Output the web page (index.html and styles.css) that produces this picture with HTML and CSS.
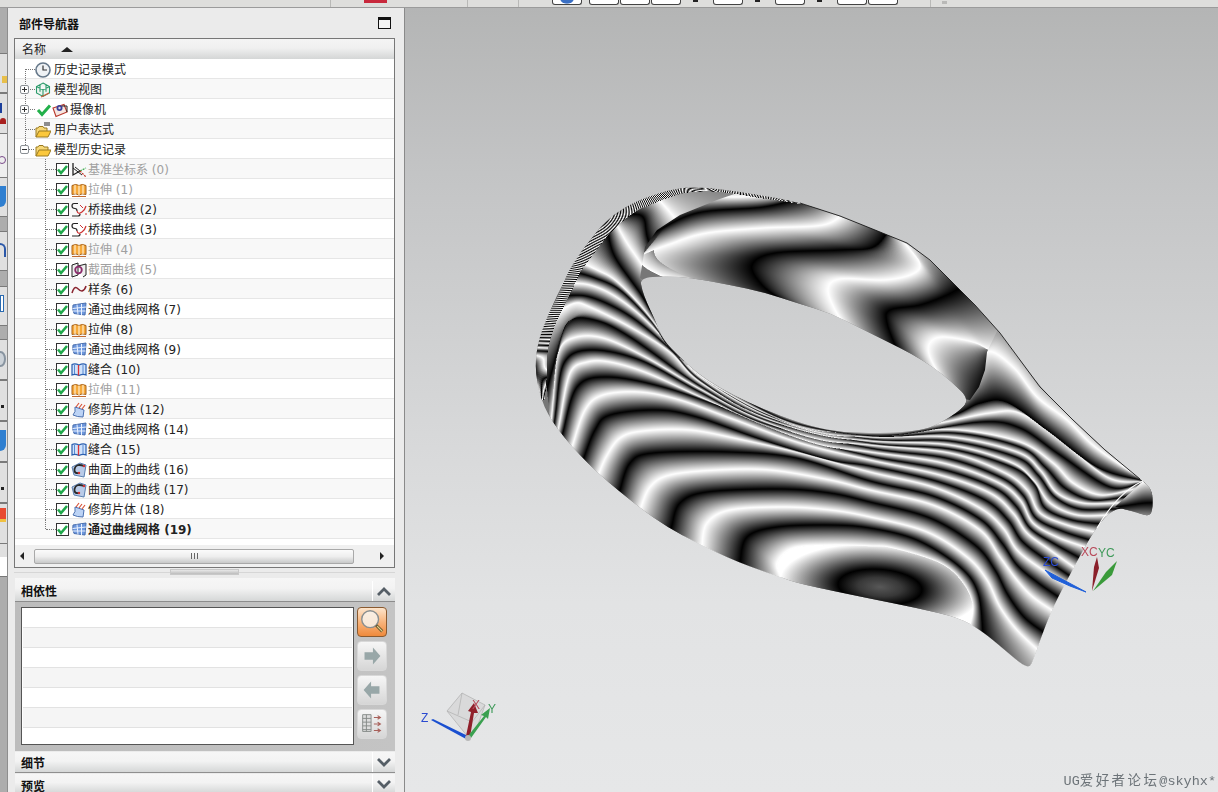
FILE: index.html
```html
<!DOCTYPE html>
<html lang="zh">
<head>
<meta charset="utf-8">
<title>部件导航器</title>
<link rel="stylesheet" href="styles.css">
</head>
<body>
<svg class="defs" width="0" height="0">
  <defs>
    <symbol id="i-clock" viewBox="0 0 16 16"><circle cx="8" cy="8" r="7" fill="#eef1f4" stroke="#66788a" stroke-width="1.6"/><path d="M8 3.500V8H12" fill="none" stroke="#333" stroke-width="1.2"/></symbol>
    <symbol id="i-cube" viewBox="0 0 16 16"><path d="M8 1L14.500 4.500V11L8 14.500L1.500 11V4.500Z M1.500 4.500L8 8L14.500 4.500 M8 8V14.500 M5 2.800V9.700 M11 2.800V9.700" fill="#dcefe6" fill-opacity=".5" stroke="#2a9a6a" stroke-width="1.100"/><path d="M6 15L14 11" stroke="#d05a3a" stroke-width="1.200"/></symbol>
    <symbol id="i-tick" viewBox="0 0 16 16"><path d="M2 8L6 12.500L14 3.500" fill="none" stroke="#22b04a" stroke-width="3"/></symbol>
    <symbol id="i-cam" viewBox="0 0 16 16"><path d="M1 6L12 2.500L15 10L4 14.500Z" fill="#f6e6e0" stroke="#b8382c" stroke-width="1.100"/><circle cx="7.500" cy="6" r="3" fill="#3a3f9a"/><circle cx="7.500" cy="6" r="1.200" fill="#ddd"/><path d="M10 4H15V10" fill="none" stroke="#222"/></symbol>
    <symbol id="i-folder" viewBox="0 0 16 16"><path d="M1 14V5H3L4 3.500H8L9 5H13V8" fill="#f6d878" stroke="#9a7a20"/><path d="M1 14L4 8H16L13 14Z" fill="#fbc83c" stroke="#9a7a20"/></symbol>
    <symbol id="i-exprf" viewBox="0 0 16 16"><path d="M1 15V6H3L4 4.500H8L9 6H12V9" fill="#f6d878" stroke="#9a7a20"/><path d="M1 15L4 9H16L13 15Z" fill="#fbc83c" stroke="#9a7a20"/><path d="M9 1H15M9 3H15" stroke="#222"/></symbol>
    <symbol id="i-datum" viewBox="0 0 16 16"><path d="M2 1V13L9 9" fill="none" stroke="#222" stroke-width="1.300"/><path d="M2 6L11 13M4 5L9 9" fill="none" stroke="#222"/><path d="M9 9L15 6" stroke="#3aa84a" stroke-dasharray="2 1" stroke-width="1.200"/><path d="M9 9L15 15" stroke="#c0392b" stroke-dasharray="2 1" stroke-width="1.200"/></symbol>
    <symbol id="i-ext" viewBox="0 0 16 16"><path d="M1 3.500Q5 1.500 8 3.500Q11 1.500 15 3.500V12.500Q11 11 8 13Q5 11 1 12.500Z" fill="#f6a93a" stroke="#a9631a"/><path d="M4 3V12M8 3.500V13M12 3V12" stroke="#fff3d8" stroke-width="1.100"/><path d="M1 14.500H15" stroke="#c06a30"/></symbol>
    <symbol id="i-bridge" viewBox="0 0 16 16"><path d="M7 1.500H3Q1 1.500 1 4Q1 6.500 4 6.500Q6 6.500 6 9" fill="none" stroke="#222" stroke-width="1.200"/><path d="M1 14H7Q9 14 9 12" fill="none" stroke="#222" stroke-width="1.200"/><path d="M6 9Q7 13 11 10Q14 8 15 4" fill="none" stroke="#c33" stroke-width="1.200"/><path d="M9 3L12 6M14 12H16" stroke="#c33"/></symbol>
    <symbol id="i-sect" viewBox="0 0 16 16"><path d="M1 3L7 1V13L1 15Z M7 4L15 2V13L12 15" fill="#eee" stroke="#222"/><circle cx="7.500" cy="8" r="3.300" fill="none" stroke="#8a2a6a" stroke-width="1.800"/></symbol>
    <symbol id="i-spline" viewBox="0 0 16 16"><path d="M1 11Q3 4 6 6Q9 9 11 9Q14 8 15 4" fill="none" stroke="#8a2530" stroke-width="1.500"/></symbol>
    <symbol id="i-mesh" viewBox="0 0 16 16"><path d="M2 3L15 1L14 13L3 11.500Q1 7 2 3Z" fill="#6d97dd" stroke="#4a6fae"/><path d="M6 2.500L7 12.500M10.500 2L10.500 13M1.500 6.500L15 5M2 9L14.500 9" stroke="#eaf2ff"/></symbol>
    <symbol id="i-sew" viewBox="0 0 16 16"><path d="M1 2.500Q4 1 8 3Q12 1 15 2.500V13Q12 11.500 8 13.500Q4 11.500 1 13Z" fill="#cfe2fb" stroke="#2a5fb0" stroke-width="1.200"/><path d="M7.500 3V13.500" stroke="#d33" stroke-width="1.300"/><path d="M3.500 3V12M12 3V12" stroke="#5a8ad0"/></symbol>
    <symbol id="i-trim" viewBox="0 0 16 16"><path d="M4 5L13 8L12 15Q6 15 2 13Q5 10 4 5Z" fill="#bcd3f5" stroke="#4a70b0"/><path d="M5 5L8 1M8 6L11 2M11 7L14 3" stroke="#d8553a" stroke-width="1.200"/></symbol>
    <symbol id="i-cos" viewBox="0 0 16 16"><path d="M1 5L9 1L15 3L13 15L3 13Z" fill="#b9cbe8" stroke="#5a7fb0"/><path d="M13 4Q5 1 3.500 7Q3 12 8 11" fill="none" stroke="#2a2a2a" stroke-width="1.800"/><circle cx="13" cy="4" r="1.200" fill="#c33"/><circle cx="8" cy="11" r="1.200" fill="#c33"/></symbol>
    <symbol id="i-cb" viewBox="0 0 13 13"><rect x=".5" y=".5" width="12" height="12" fill="#fff" stroke="#333"/><path d="M2 6.500L5 10L11 3" fill="none" stroke="#1fa84a" stroke-width="2.600"/></symbol>
    <symbol id="i-up" viewBox="0 0 20 12"><path d="M4 10L10 4L16 10" fill="none" stroke="#555e66" stroke-width="2.800"/></symbol>
    <symbol id="i-down" viewBox="0 0 20 12"><path d="M4 3L10 9L16 3" fill="none" stroke="#555e66" stroke-width="2.800"/></symbol>
  </defs>
</svg>

<div class="app">
  <div class="topbar">
    <span class="tb-red"></span>
    <span class="tb-btn tb-blue"></span>
    <span class="tb-btn tb-after"></span>
    <span class="tb-btn"></span>
    <span class="tb-btn"></span>
    <span class="tb-btn tb-far"></span>
    <span class="tb-btn tb-far"></span>
    <span class="tb-btn tb-far"></span>
    <span class="tb-btn"></span>
  </div>
  <div class="main">
    <div class="strip">
      <div class="s-dark s53"></div>
      <div class="s-cell s40"><i class="dot dot-yellow"></i></div>
      <div class="s-cell s41"><i class="bar bar-blue"></i><i class="dot dot-red"></i></div>
      <div class="s-plain s43"><i class="ring"></i></div>
      <div class="s-cell s40"><i class="bar bar-sky"></i></div>
      <div class="s-dark s14"></div>
      <div class="s-cell s40"><i class="bar bar-navy"></i></div>
      <div class="s-dark s15"></div>
      <div class="s-cell s40"><i class="bar bar-page"></i></div>
      <div class="s-dark s13"></div>
      <div class="s-cell s41"><i class="ring ring-grey"></i></div>
      <div class="s-cell s41"><i class="dot dot-black"></i></div>
      <div class="s-cell s41"><i class="bar bar-sky"></i></div>
      <div class="s-cell s41"><i class="dot dot-black"></i></div>
      <div class="s-cell s41"><i class="bar bar-hot"></i></div>
      <div class="s-white"></div>
      <div class="s-dark s-rest"></div>
    </div>

    <section class="panel">
      <header class="panel-head">
        <h1>部件导航器</h1>
        <span class="maxbox"></span>
      </header>

      <div class="tree">
        <div class="tree-head"><span>名称</span><i class="sort"></i></div>
        <div class="rows">
          <div class="row root vfirst"><span class="slot"></span><svg class="ic"><use href="#i-clock"/></svg><span class="tx">历史记录模式</span></div>
          <div class="row root vmid"><span class="slot"><b class="exp plus"></b></span><svg class="ic"><use href="#i-cube"/></svg><span class="tx">模型视图</span></div>
          <div class="row root vmid"><span class="slot"><b class="exp plus"></b></span><svg class="ic ic-tick"><use href="#i-tick"/></svg><svg class="ic"><use href="#i-cam"/></svg><span class="tx tx-cam">摄像机</span></div>
          <div class="row root vmid"><span class="slot"></span><svg class="ic"><use href="#i-exprf"/></svg><span class="tx">用户表达式</span></div>
          <div class="row root vlast nodash"><span class="slot"><b class="exp minus"></b></span><svg class="ic"><use href="#i-folder"/></svg><span class="tx">模型历史记录</span></div>

          <div class="row kid"><svg class="cb"><use href="#i-cb"/></svg><svg class="ic"><use href="#i-datum"/></svg><span class="tx off">基准坐标系 (0)</span></div>
          <div class="row kid"><svg class="cb"><use href="#i-cb"/></svg><svg class="ic"><use href="#i-ext"/></svg><span class="tx off">拉伸 (1)</span></div>
          <div class="row kid"><svg class="cb"><use href="#i-cb"/></svg><svg class="ic"><use href="#i-bridge"/></svg><span class="tx">桥接曲线 (2)</span></div>
          <div class="row kid"><svg class="cb"><use href="#i-cb"/></svg><svg class="ic"><use href="#i-bridge"/></svg><span class="tx">桥接曲线 (3)</span></div>
          <div class="row kid"><svg class="cb"><use href="#i-cb"/></svg><svg class="ic"><use href="#i-ext"/></svg><span class="tx off">拉伸 (4)</span></div>
          <div class="row kid"><svg class="cb"><use href="#i-cb"/></svg><svg class="ic"><use href="#i-sect"/></svg><span class="tx off">截面曲线 (5)</span></div>
          <div class="row kid"><svg class="cb"><use href="#i-cb"/></svg><svg class="ic"><use href="#i-spline"/></svg><span class="tx">样条 (6)</span></div>
          <div class="row kid"><svg class="cb"><use href="#i-cb"/></svg><svg class="ic"><use href="#i-mesh"/></svg><span class="tx">通过曲线网格 (7)</span></div>
          <div class="row kid"><svg class="cb"><use href="#i-cb"/></svg><svg class="ic"><use href="#i-ext"/></svg><span class="tx">拉伸 (8)</span></div>
          <div class="row kid"><svg class="cb"><use href="#i-cb"/></svg><svg class="ic"><use href="#i-mesh"/></svg><span class="tx">通过曲线网格 (9)</span></div>
          <div class="row kid"><svg class="cb"><use href="#i-cb"/></svg><svg class="ic"><use href="#i-sew"/></svg><span class="tx">缝合 (10)</span></div>
          <div class="row kid"><svg class="cb"><use href="#i-cb"/></svg><svg class="ic"><use href="#i-ext"/></svg><span class="tx off">拉伸 (11)</span></div>
          <div class="row kid"><svg class="cb"><use href="#i-cb"/></svg><svg class="ic"><use href="#i-trim"/></svg><span class="tx">修剪片体 (12)</span></div>
          <div class="row kid"><svg class="cb"><use href="#i-cb"/></svg><svg class="ic"><use href="#i-mesh"/></svg><span class="tx">通过曲线网格 (14)</span></div>
          <div class="row kid"><svg class="cb"><use href="#i-cb"/></svg><svg class="ic"><use href="#i-sew"/></svg><span class="tx">缝合 (15)</span></div>
          <div class="row kid"><svg class="cb"><use href="#i-cb"/></svg><svg class="ic"><use href="#i-cos"/></svg><span class="tx">曲面上的曲线 (16)</span></div>
          <div class="row kid"><svg class="cb"><use href="#i-cb"/></svg><svg class="ic"><use href="#i-cos"/></svg><span class="tx">曲面上的曲线 (17)</span></div>
          <div class="row kid"><svg class="cb"><use href="#i-cb"/></svg><svg class="ic"><use href="#i-trim"/></svg><span class="tx">修剪片体 (18)</span></div>
          <div class="row kid kid-last"><svg class="cb"><use href="#i-cb"/></svg><svg class="ic"><use href="#i-mesh"/></svg><span class="tx cur">通过曲线网格 (19)</span></div>
        </div>
        <div class="hscroll">
          <i class="arr arr-l"></i>
          <div class="thumb"><span class="grip"></span></div>
          <i class="arr arr-r"></i>
        </div>
      </div>

      <div class="sash"><span class="sash-handle"></span></div>

      <div class="acc-head acc-first"><span>相依性</span><button class="chev"><svg class="chev-ic"><use href="#i-up"/></svg></button></div>
      <div class="acc-body">
        <div class="dep-list">
          <div class="dep-row"></div><div class="dep-row"></div><div class="dep-row"></div><div class="dep-row"></div><div class="dep-row"></div><div class="dep-row"></div><div class="dep-row"></div>
        </div>
        <div class="dep-btns">
          <button class="dep-btn hot">
            <svg viewBox="0 0 30 30" class="dep-ic"><circle cx="13" cy="12" r="9" fill="#f8f2ea" fill-opacity=".85" stroke="#8a8f90" stroke-width="1.500"/><path d="M19.500 18.500L26 25" stroke="#6a5a30" stroke-width="3.200"/><path d="M20.500 19.500L26 25" stroke="#e8d690" stroke-width="1.200"/></svg>
          </button>
          <button class="dep-btn">
            <svg viewBox="0 0 30 30" class="dep-ic"><path d="M7 11H16V6L24 15L16 24V19H7Z" fill="#98a7a8"/></svg>
          </button>
          <button class="dep-btn">
            <svg viewBox="0 0 30 30" class="dep-ic"><path d="M23 11H14V6L6 15L14 24V19H23Z" fill="#98a7a8"/></svg>
          </button>
          <button class="dep-btn">
            <svg viewBox="0 0 30 30" class="dep-ic"><path d="M5 5H14V23H5Z M5 9H14M5 13H14M5 17H14M5 21H14M9 5V23" fill="#ddd" stroke="#858a88"/><path d="M17 8H23M21 6L24 8L21 10M17 15H23M21 13L24 15L21 17M17 22H23M21 20L24 22L21 24" fill="none" stroke="#a8605a" stroke-width="1.200"/></svg>
          </button>
        </div>
      </div>
      <div class="acc-head acc-second"><span>细节</span><button class="chev"><svg class="chev-ic"><use href="#i-down"/></svg></button></div>
      <div class="acc-head acc-third"><span>预览</span><button class="chev"><svg class="chev-ic"><use href="#i-down"/></svg></button></div>
    </section>

    <div class="view">
      <canvas id="zebra" class="zebra" width="813" height="784"></canvas>
      <svg class="scene" viewBox="405 8 813 784" width="813" height="784">
        <g class="wcs">
          <path class="ax-blue" d="M1086 592L1045 570L1052 578L1070 586Z"/>
          <path class="ax-red" d="M1092 591L1094 567L1097 557L1099 568Z"/>
          <path class="ax-green" d="M1093 591L1106 572L1117 561L1112 575Z"/>
          <text class="lbl lbl-blue" x="1043" y="566">ZC</text>
          <text class="lbl lbl-red" x="1081" y="556">XC</text>
          <text class="lbl lbl-green" x="1098" y="557">YC</text>
        </g>
        <g class="triad">
          <path class="cube-face" d="M447 711L462 693L485 705L476 730L468 737Z"/>
          <path class="cube-line" d="M447 711L462 693L485 705L476 730L468 737L447 711M447 711L472 722L485 705M472 722L468 737M462 693L458 715"/>
          <path class="tr-blue" d="M468 736L433 719L431 720L466 739Z"/>
          <path class="tr-red" d="M466 736L471 712L468 711L474 703L478 713L474 713L470 737Z"/>
          <path class="tr-green" d="M468 736L484 716L481 715L490 708L488 719L486 717L471 738Z"/>
          <circle class="tr-ball" cx="468" cy="738" r="3"/>
          <text class="lbl lbl-blue" x="421" y="722">Z</text>
          <text class="lbl lbl-red" x="472" y="709">X</text>
          <text class="lbl lbl-green" x="488" y="713">Y</text>
        </g>
      </svg>
      <div class="mark">UG<span class="mark-cjk">爱好者论坛</span>@skyhx*</div>
    </div>
  </div>
</div>
<script src="script.js"></script>
</body>
</html>
```

FILE: styles.css
```css
* { box-sizing: border-box; }
html, body { margin: 0; padding: 0; }
body { width: 1218px; height: 792px; overflow: hidden; background: #e6e7e8; font-family: "DejaVu Sans", "Noto Sans CJK SC", sans-serif; font-size: 12px; color: #222; }
.defs { position: absolute; }
.app { display: flex; flex-direction: column; width: 1218px; height: 792px; overflow: hidden; }

/* top toolbar, cut off by the screenshot */
.topbar { flex: 0 0 8px; display: flex; align-items: flex-start; gap: 1px; padding-left: 552px; border-bottom: 1px solid #9b9b9b; position: relative;
  background:
    linear-gradient(#b9b9b7, #b9b9b7) no-repeat 330px 0 / 1px 7px,
    linear-gradient(#b9b9b7, #b9b9b7) no-repeat 467px 0 / 1px 7px,
    linear-gradient(#b9b9b7, #b9b9b7) no-repeat 518px 0 / 1px 7px,
    linear-gradient(#b9b9b7, #b9b9b7) no-repeat 930px 0 / 1px 7px,
    linear-gradient(#b9b9b7, #b9b9b7) no-repeat 942px 1px / 5px 3px,
    #dededc; }
.tb-btn { width: 30px; height: 5px; background: #fff; border: 1px solid #444; border-top: 0; border-radius: 0 0 3px 3px; position: relative; }
.tb-blue { background: radial-gradient(ellipse 7px 4px at 50% 0, #3a6fc4 80%, #fff 100%); }
.tb-after { margin-left: 6px; }
.tb-far { margin-left: 31px; }
.tb-far::before { content: ""; position: absolute; left: -21px; top: 0; width: 5px; height: 2px; background: #222; }
.tb-red { position: absolute; left: 364px; top: 0; width: 23px; height: 3px; background: #c8283c; }

.main { flex: 1; display: flex; min-height: 0; }

/* left toolbar column, mostly out of frame */
.strip { flex: 0 0 8px; display: flex; flex-direction: column; overflow: hidden; border-right: 1px solid #8e8e8e; background: #ebebeb; }
.strip > div { flex: none; position: relative; overflow: hidden; }
.s-dark { background: #adadad; }
.s-cell { background: #e0e0e0; border-top: 1px solid #7a7a7a; border-bottom: 1px solid #7a7a7a; }
.s-plain { background: #eeeeee; }
.s-white { height: 33px; background: linear-gradient(#e0e0e0 40%, #fff 40%); border-bottom: 1px solid #777; }
.s53 { height: 45px; } .s40 { height: 40px; } .s41 { height: 41px; } .s43 { height: 43px; }
.s14 { height: 14px; } .s15 { height: 15px; } .s13 { height: 13px; }
.s-rest { height: 240px; }
.dot, .bar, .ring { position: absolute; display: block; }
.dot-yellow { left: 2px; top: 22px; width: 5px; height: 7px; background: #e8bf4a; }
.dot-red { left: 0; top: 24px; width: 6px; height: 6px; background: #a8201e; border-radius: 6px 6px 0 0; }
.dot-black { left: 1px; top: 24px; width: 3px; height: 3px; background: #222; }
.bar-blue { left: 0; top: 9px; width: 2px; height: 10px; background: #1c3f9c; }
.bar-sky { left: 0; top: 8px; width: 6px; height: 21px; background: #2f7fd0; border-radius: 0 0 6px 0; }
.bar-navy { left: 0; top: 11px; width: 6px; height: 14px; border: 2px solid #2a57a8; border-left: 0; border-bottom: 0; border-radius: 0 8px 0 0; }
.bar-page { left: 0; top: 8px; width: 4px; height: 17px; background: #fff; border: 1px solid #2a6ab0; }
.bar-hot { left: 0; top: 4px; width: 6px; height: 14px; background: #e84a30; border-bottom: 3px solid #f0c040; }
.ring { left: -2px; top: 22px; width: 8px; height: 8px; border: 1px solid #7a4a8a; border-radius: 50%; }
.ring-grey { left: -5px; top: 11px; width: 11px; height: 16px; border: 2px solid #8894a0; background: #ccd2d8; }

/* navigator panel */
.panel { flex: 0 0 397px; display: flex; flex-direction: column; background: #ebebeb; border-right: 1px solid #8a8a8a; }
.panel-head { flex: 0 0 30px; display: flex; align-items: center; justify-content: space-between; padding: 0 13px 0 11px; }
.panel-head h1 { margin: 0; font: 700 12px "Noto Sans CJK SC", sans-serif; color: #111; }
.maxbox { width: 13px; height: 12px; border: 1.5px solid #111; border-top-width: 3px; background: #f4f4f4; }

.tree { flex: 0 0 530px; margin: 0 9px 0 6px; display: flex; flex-direction: column; border: 1px solid #777; background: #fff; }
.tree-head { flex: 0 0 20px; display: flex; align-items: center; gap: 14px; padding-left: 7px; background: linear-gradient(#f4f4f4, #f0f0f0 45%, #d4d6d6); font-family: "Noto Sans CJK SC", sans-serif; line-height: 1; }
.sort { width: 0; height: 0; border: 6px solid transparent; border-top: 0; border-bottom: 5px solid #222; margin-left: 1px; }
.rows { flex: 0 0 480px; display: flex; flex-direction: column; }
.row { flex: 0 0 20px; display: flex; align-items: center; position: relative; padding-top: 2px; border-bottom: 1px solid #e6e6e6; background: #fff; line-height: 1; white-space: nowrap; }
.row:nth-child(even) { background: #f8f8f8; }
.row::before, .row::after { content: ""; position: absolute; }
.root { padding-left: 5px; }
.root::before { left: 10px; top: 10px; width: 10px; border-top: 1px dotted #777; }
.root::after { left: 10px; width: 0; border-left: 1px dotted #777; top: 0; height: 21px; }
.vfirst::after { top: 10px; height: 11px; }
.vlast::after { height: 10px; }
.nodash::before { width: 9px; }
.slot { flex: 0 0 15px; height: 9px; position: relative; z-index: 1; }
.exp { position: absolute; left: 0; top: 0; width: 9px; height: 9px; background: #fdfdfd; border: 1px solid #8a8f94; border-radius: 2px; }
.plus::before, .plus::after, .minus::before { content: ""; position: absolute; background: #333; }
.plus::before, .minus::before { left: 1px; top: 3px; width: 5px; height: 1px; }
.plus::after { left: 3px; top: 1px; width: 1px; height: 5px; }
.ic { flex: 0 0 16px; width: 16px; height: 16px; position: relative; z-index: 1; }
.ic-tick { margin-left: 1px; }
.tx { margin-left: 3px; color: #222; }
.tx-cam { margin-left: 2px; }
.kid { padding-left: 41px; }
.kid::before { left: 31px; top: 10px; width: 10px; border-top: 1px dotted #777; }
.kid::after { left: 30px; width: 0; border-left: 1px dotted #777; top: 0; height: 21px; }
.kid-last::after { height: 10px; }
.kid .tx { margin-left: 1px; }
.cb { flex: 0 0 13px; width: 13px; height: 13px; margin-right: 2px; }
.off { color: #a0a0a0; }
.cur { font-weight: 700; }

.hscroll { flex: 1; display: flex; align-items: center; background: #f0f0f0; padding: 0 5px 0 0; margin-top: 6px; }
.arr { flex: none; width: 0; height: 0; border: 4px solid transparent; }
.arr-l { border-right: 4px solid #222; border-left: 0; margin-left: 5px; }
.arr-r { border-left: 4px solid #222; border-right: 0; margin-left: 26px; }
.thumb { flex: 0 0 320px; height: 15px; margin-left: 10px; display: flex; align-items: center; justify-content: center; border: 1px solid #a9a9a9; border-radius: 2px; background: linear-gradient(#fbfbfb, #eeeeee 50%, #c8c9c9); }
.grip { width: 7px; height: 6px; background: repeating-linear-gradient(90deg, #666 0 1px, transparent 1px 3px); }

.sash { flex: 0 0 10px; position: relative; margin: 0 9px 0 6px; }
.sash::before { content: ""; position: absolute; left: 0; right: 0; top: 4px; border-top: 1px solid #d6d6d6; }
.sash-handle { position: absolute; left: 156px; top: 1px; width: 69px; height: 6px; background: linear-gradient(#e8e8e8, #bcbcbc); border: 1px solid #c8c8c8; }

.acc-head { display: flex; align-items: center; justify-content: space-between; margin: 0 9px 0 7px; padding-left: 6px; background: linear-gradient(#f6f6f6, #f3f3f3 45%, #d5d7d7); font: 700 12px "Noto Sans CJK SC", sans-serif; color: #111; line-height: 1; }
.acc-first { flex: 0 0 23px; padding-top: 3px; }
.acc-second { flex: 0 0 21px; margin-top: 1px; border-bottom: 1px solid #8f8f8f; }
.acc-second span { position: relative; top: 1px; }
.acc-third { flex: 0 0 19px; margin-top: 1px; align-items: flex-start; padding-top: 6px; }
.chev { align-self: stretch; width: 23px; margin: 0; padding: 0; border: 0; border-left: 1px solid #fff; background: transparent; display: flex; align-items: center; justify-content: center; }
.acc-third .chev { margin-top: -6px; }
.chev-ic { width: 20px; height: 12px; }

.acc-body { flex: 0 0 150px; margin: 0 9px 0 7px; display: flex; align-items: flex-start; gap: 3px; padding: 5px 0 0 6px; background: linear-gradient(90deg, #bcbcbc, #c4c4c4); border-top: 1px solid #8c8c8c; }
.dep-list { flex: 0 0 333px; height: 138px; display: flex; flex-direction: column; background: #fff; border: 1px solid #555; padding: 0 1px; }
.dep-row { flex: 0 0 20px; border-bottom: 1px solid #e2e2e2; background: #fff; }
.dep-row:nth-child(even) { background: #f5f5f5; }
.dep-row:last-child { flex: 1; border-bottom: 0; }
.dep-btns { display: flex; flex-direction: column; gap: 4px; }
.dep-btn { width: 30px; height: 30px; margin: 0; padding: 0; border: 1px solid #d8d8d8; border-radius: 4px; background: linear-gradient(#f6f6f6, #d6d6d6); }
.dep-btn.hot { border-color: #8a5a30; background: linear-gradient(#fde5cc, #f8b47c 50%, #ef8a3c); }
.dep-ic { display: block; width: 28px; height: 28px; }

/* graphics view */
.view { flex: 1; position: relative; overflow: hidden; background: linear-gradient(#b4b5b5, #c3c4c5 21%, #d8d9da 56%, #e2e3e4 76%, #e6e7e8); }
.zebra { display: block; }
.scene { position: absolute; left: 0; top: 0; display: block; }
.lbl { font: 12px "Liberation Sans", sans-serif; }
.lbl-blue { fill: #2a4ad0; } .lbl-red { fill: #b84a5a; } .lbl-green { fill: #3f9a5a; }
.ax-blue { fill: #1f5fd8; stroke: #1f5fd8; }
.ax-red { fill: #8a1f2a; }
.ax-green { fill: #3a9a3a; }
.cube-face { fill: #cfcfcf; fill-opacity: .55; }
.cube-line { fill: none; stroke: #b4b4b4; stroke-width: .8; }
.tr-blue { fill: #1a4fd0; }
.tr-red { fill: #8f1f2a; }
.tr-green { fill: #3aa050; }
.tr-ball { fill: #b8b8b8; }
.mark { position: absolute; right: 2px; bottom: 2px; font: 13.5px "Liberation Mono", "Noto Sans CJK SC", monospace; color: #6c7378; white-space: nowrap; line-height: 16px; }
.mark-cjk { letter-spacing: 2.4px; font-family: "Noto Sans CJK SC", sans-serif; }
```

FILE: script.js
```js
// Zebra (reflection) shading of the surface: each curve is a level of a phase
// field, and the field is filled between neighbouring curves pixel by pixel.
(function () {
  var OX = 405, OY = 8, W = 813, H = 784;
  var canvas = document.getElementById('zebra');
  var ctx = canvas.getContext('2d');
  ctx.translate(-OX, -OY);

  var OUTER = [690,187,720,189,760,195,797,202,840,216,880,232,907,243,930,260,950,280,975,305,1000,333,1020,360,1040,387,1073,420,1105,450,1140,479,1152,489,1153,507,1150,517,1132,511,1115,507,1095,528,1067,580,1050,613,1033,660,1030,667,1023,665,1013,657,993,640,980,630,960,618,917,608,867,598,800,584,783,578,737,562,697,543,667,527,640,508,597,473,563,437,543,407,535,373,537,345,547,317,560,290,573,263,590,240,607,220,627,206,647,197,670,190];
  var HOLE = [640,278,665,276,693,278,730,285,763,292,800,304,830,313,860,328,890,343,912,354,933,367,952,382,970,400,957,413,933,427,915,431,890,433,870,433,840,432,813,427,780,416,747,402,720,388,697,373,680,357,663,340,655,320,647,303,642,290];
  var FRONT_CLIP = [760,185,717,200,680,215,657,230,645,247,640,278,800,380,970,400,979,387,985,370,987,352,1000,325,1170,470,1170,690,900,690,510,500,510,170];
  var LOBE_CLIP = [1143,481,1153,489,1153,507,1150,517,1132,511,1115,507];

  var FRONT = [
    [0,  [782,580,777,563,793,548,830,545,870,546,893,548,940,563,963,583,973,607,968,632]],
    [1,  [740,563,747,537,777,527,830,525,870,528,917,540,960,567,978,593,983,635]],
    [2,  [702,545,707,523,730,510,783,507,830,510,870,517,927,532,967,557,987,580,1000,607,1017,630,1038,650]],
    [3,  [672,525,680,503,707,492,780,489,830,493,870,502,930,518,975,545,995,570,1008,595,1025,618,1048,635]],
    [4,  [640,510,650,487,670,475,717,470,770,470,830,480,870,490,933,505,980,530,1000,557,1017,580,1033,597,1055,612]],
    [5,  [620,490,630,463,653,453,730,452,797,458,870,481,933,496,980,519,1002,543,1017,565,1037,582,1060,598]],
    [6,  [598,476,606,457,620,438,643,431,690,430,743,440,800,453,870,472,933,487,980,508,1003,528,1017,550,1040,568,1066,584]],
    [7,  [583,460,595,430,610,415,657,410,697,417,763,440,830,460,870,466,936,481,985,500,1008,520,1022,541,1045,559,1070,576]],
    [8,  [572,447,585,410,603,395,640,392,680,400,730,418,800,443,870,460,940,475,990,493,1013,513,1027,533,1050,550,1075,568]],
    [9,  [563,432,577,387,607,377,663,387,730,410,800,437,870,456,941,469,993,487,1016,506,1030,528,1053,543,1080,558]],
    [10, [560,420,570,373,587,362,610,362,647,373,700,397,763,425,820,445,870,452,943,463,997,482,1020,500,1033,523,1057,537,1085,547]],
    [11, [556,410,564,363,590,350,640,360,700,392,763,423,870,448,946,458,1000,477,1023,495,1036,518,1062,531,1090,540]],
    [12, [553,400,558,353,573,338,603,338,647,358,700,389,763,421,820,440,870,445,950,453,1003,472,1027,490,1040,513,1067,525,1095,532]],
    [13, [555,360,568,322,595,320,630,337,700,386,763,419,870,443,950,449,1012,467,1035,485,1045,508,1072,520,1102,524]],
    [14, [558,312,575,303,590,307,630,327,670,352,700,382,763,417,820,435,870,441,950,445,1010,462,1033,480,1050,503,1077,515,1108,515]],
    [15, [560,296,590,297,630,316,670,349,700,380,763,416,870,439,950,441,1016,457,1038,475,1055,497,1080,509,1113,509]],
    [16, [570,283,590,285,613,295,640,315,670,345,700,377,763,414,820,433,870,437,950,437,1017,452,1040,470,1057,493,1083,503,1117,503]],
    [17, [575,272,595,278,620,290,650,320,680,358,763,413,870,436,955,433,1020,447,1045,467,1065,488,1092,500,1125,497]],
    [18, [580,262,597,270,615,280,640,305,670,343,700,376,763,412,820,431,900,431,960,430,1020,442,1053,463,1073,483,1100,495,1130,490]],
    [19, [608,232,615,257,640,293,680,352,763,410,830,431,895,435,980,422,1020,428,1060,455,1110,487,1140,483]],
    [20, [618,227,627,243,640,262,665,300,700,365,763,405,820,427,890,432,940,423,990,413,1020,413,1057,437,1107,477,1140,482]],
    [21, [625,215,643,217,650,245,680,300,763,400,830,420,870,419,945,417,980,403,1007,402,1047,430,1097,467,1140,480]],
    [22, [650,190,690,240,763,370,870,398,950,398,975,385,987,352,1013,367,1037,397,1067,420,1095,447,1140,478]],
    [22.5, [650,180,750,200,870,280,960,300,1000,325,1045,380,1110,445,1150,475]]
  ];

  var UPPER = [
    [1, [975,402,985,380,990,360,995,345]],
    [2, [945,385,930,357,930,343,943,337,973,342,990,350,1010,355]],
    [3, [897,350,887,323,890,310,920,305,947,295,965,285]],
    [4, [852,328,838,315,828,290,840,279,883,280,910,275,920,265,908,247,895,232]],
    [5, [785,302,762,285,752,265,775,253,840,250,873,247,890,228]],
    [6, [700,285,660,275,640,258,673,243,707,233,763,228,823,225,845,212]],
    [7, [630,240,653,233,697,213,763,207,800,198]],
    [8, [640,205,663,198,700,196,737,197,790,195]],
    [8.8, [640,175,700,175,790,180]]
  ];

  var RIM = [
    [0,  [537,400,535,373,537,345,547,317,560,290,573,263,590,240,607,220,627,206,647,197,670,190,690,187,720,189,760,195,800,202,820,208]],
    [23, [545,397,547,370,548,348,556,322,569,296,581,271,598,248,612,231,632,214,652,204,673,196,692,192,721,192,760,198,800,204,820,209]]
  ];

  var LOBE = [
    [0,   [1110,500,1125,495,1143,482,1160,482]],
    [1,   [1108,508,1130,505,1145,503,1160,503]],
    [1.7, [1108,522,1130,518,1150,520,1165,522]]
  ];

  function pts(a) {
    var r = [];
    for (var i = 0; i < a.length; i += 2) r.push([a[i], a[i + 1]]);
    return r;
  }

  function spline(p) {
    var out = [], n = p.length;
    for (var i = 0; i < n - 1; i++) {
      var p0 = p[Math.max(0, i - 1)], p1 = p[i], p2 = p[i + 1], p3 = p[Math.min(n - 1, i + 2)];
      for (var s = 0; s < 12; s++) {
        var t = s / 12, t2 = t * t, t3 = t2 * t;
        out.push([
          0.5 * (2 * p1[0] + (p2[0] - p0[0]) * t + (2 * p0[0] - 5 * p1[0] + 4 * p2[0] - p3[0]) * t2 + (3 * p1[0] - p0[0] - 3 * p2[0] + p3[0]) * t3),
          0.5 * (2 * p1[1] + (p2[1] - p0[1]) * t + (2 * p0[1] - 5 * p1[1] + 4 * p2[1] - p3[1]) * t2 + (3 * p1[1] - p0[1] - 3 * p2[1] + p3[1]) * t3)
        ]);
      }
    }
    out.push(p[n - 1]);
    return out;
  }

  function extend(p, len) {
    var a = p[0], b = p[2], m = p.length, c = p[m - 1], d = p[m - 3];
    function out(o, q) {
      var dx = o[0] - q[0], dy = o[1] - q[1], l = Math.hypot(dx, dy) || 1;
      return [o[0] + dx / l * len, o[1] + dy / l * len];
    }
    return [out(a, b)].concat(p, [out(c, d)]);
  }

  function resample(p, n) {
    var d = [0], i;
    for (i = 1; i < p.length; i++) d.push(d[i - 1] + Math.hypot(p[i][0] - p[i - 1][0], p[i][1] - p[i - 1][1]));
    var total = d[d.length - 1], out = [], j = 0;
    for (i = 0; i <= n; i++) {
      var t = total * i / n;
      while (j < p.length - 2 && d[j + 1] < t) j++;
      var seg = d[j + 1] - d[j] || 1, f = (t - d[j]) / seg;
      out.push([p[j][0] + (p[j + 1][0] - p[j][0]) * f, p[j][1] + (p[j + 1][1] - p[j][1]) * f]);
    }
    return out;
  }

  function prepare(raw, n, anchorX, ext) {
    var p = extend(spline(pts(raw)), ext);
    if (anchorX === null) return resample(p, n * 2);
    var k = 0, best = 1e9;
    p.forEach(function (q, i) {
      var e = Math.abs(q[0] - anchorX);
      if (e < best) { best = e; k = i; }
    });
    return resample(p.slice(0, k + 1), n).concat(resample(p.slice(k), n).slice(1));
  }

  function shade(phase) {
    var m = phase % 2;
    if (m < 0) m += 2;
    var f = m <= 1 ? m : 2 - m;
    return Math.round(255 * Math.pow(1 - f, 0.95));
  }

  function meshCanvas(lines, n, anchorX, scale, ext) {
    var w = W * scale, h = H * scale;
    var field = new Float32Array(w * h).fill(NaN);
    var ml = lines.map(function (l) { return { ph: l[0], p: prepare(l[1], n, anchorX, ext) }; });

    function tri(a, b, c, pa, pb, pc) {
      var ax = (a[0] - OX) * scale, ay = (a[1] - OY) * scale;
      var bx = (b[0] - OX) * scale, by = (b[1] - OY) * scale;
      var cx = (c[0] - OX) * scale, cy = (c[1] - OY) * scale;
      var det = (by - cy) * (ax - cx) + (cx - bx) * (ay - cy);
      if (Math.abs(det) < 1e-6) return;
      var x0 = Math.max(0, Math.floor(Math.min(ax, bx, cx))), x1 = Math.min(w - 1, Math.ceil(Math.max(ax, bx, cx)));
      var y0 = Math.max(0, Math.floor(Math.min(ay, by, cy))), y1 = Math.min(h - 1, Math.ceil(Math.max(ay, by, cy)));
      for (var y = y0; y <= y1; y++) {
        for (var x = x0; x <= x1; x++) {
          var l1 = ((by - cy) * (x + .5 - cx) + (cx - bx) * (y + .5 - cy)) / det;
          var l2 = ((cy - ay) * (x + .5 - cx) + (ax - cx) * (y + .5 - cy)) / det;
          var l3 = 1 - l1 - l2;
          if (l1 < -0.02 || l2 < -0.02 || l3 < -0.02) continue;
          field[y * w + x] = l1 * pa + l2 * pb + l3 * pc;
        }
      }
    }

    for (var i = 0; i < ml.length - 1; i++) {
      var A = ml[i], B = ml[i + 1], cnt = Math.min(A.p.length, B.p.length) - 1;
      for (var j = 0; j < cnt; j++) {
        tri(A.p[j], A.p[j + 1], B.p[j], A.ph, A.ph, B.ph);
        tri(A.p[j + 1], B.p[j + 1], B.p[j], A.ph, B.ph, B.ph);
      }
    }

    var off = document.createElement('canvas');
    off.width = w; off.height = h;
    var oc = off.getContext('2d');
    var img = oc.createImageData(w, h), d = img.data;
    for (var q = 0; q < field.length; q++) {
      var ph = field[q];
      if (ph !== ph) continue;
      var v = shade(ph), o = q * 4;
      d[o] = d[o + 1] = d[o + 2] = v;
      d[o + 3] = 255;
    }
    oc.putImageData(img, 0, 0);
    return off;
  }

  function smoothRing(path, a) {
    var p = pts(a), n = p.length;
    var m0 = [(p[n - 1][0] + p[0][0]) / 2, (p[n - 1][1] + p[0][1]) / 2];
    path.moveTo(m0[0], m0[1]);
    for (var i = 0; i < n; i++) {
      var nx = p[(i + 1) % n];
      path.quadraticCurveTo(p[i][0], p[i][1], (p[i][0] + nx[0]) / 2, (p[i][1] + nx[1]) / 2);
    }
    path.closePath();
  }

  function polygon(a) {
    var path = new Path2D(), p = pts(a);
    p.forEach(function (q, i) { if (i) path.lineTo(q[0], q[1]); else path.moveTo(q[0], q[1]); });
    path.closePath();
    return path;
  }

  var surface = new Path2D();
  smoothRing(surface, OUTER);
  smoothRing(surface, HOLE);

  ctx.save();
  ctx.clip(surface, 'evenodd');

  ctx.fillStyle = '#777';
  ctx.fillRect(OX, OY, W, H);

  ctx.drawImage(meshCanvas(UPPER, 120, null, 2, 25), OX, OY, W, H);

  ctx.save();
  ctx.translate(880, 587);
  ctx.rotate(0.08);
  ctx.scale(100, 42);
  var g = ctx.createRadialGradient(0, 0, 0, 0, 0, 1);
  g.addColorStop(0, '#585858');
  g.addColorStop(0.22, '#383838');
  g.addColorStop(0.42, '#000');
  g.addColorStop(1, '#fff');
  ctx.fillStyle = g;
  ctx.beginPath();
  ctx.rect(-2, -2, 4, 4);
  ctx.fill();
  ctx.restore();

  var front = meshCanvas(FRONT, 200, 870, 2, 30);
  ctx.save();
  ctx.clip(polygon(FRONT_CLIP));
  ctx.drawImage(front, OX, OY, W, H);
  ctx.restore();

  ctx.save();
  ctx.clip(polygon(LOBE_CLIP));
  ctx.fillStyle = '#777';
  ctx.fillRect(1100, 470, 70, 60);
  ctx.drawImage(meshCanvas(LOBE, 30, null, 2, 10), OX, OY, W, H);
  ctx.restore();

  ctx.drawImage(meshCanvas(RIM, 320, null, 1, 2), OX, OY, W, H);
  ctx.restore();

  ctx.lineJoin = 'round';
  ctx.strokeStyle = 'rgba(20,20,20,.85)';
  ctx.lineWidth = 1;
  ctx.beginPath();
  pts([800,203,840,216,880,232,907,243,930,260,950,280,975,305,1000,333,1020,360,1040,387,1073,420,1105,450,1140,479]).forEach(function (q, i) {
    if (i) ctx.lineTo(q[0], q[1]); else ctx.moveTo(q[0], q[1]);
  });
  ctx.stroke();

  ctx.strokeStyle = '#fff';
  ctx.lineWidth = 1.1;
  ctx.beginPath();
  ctx.moveTo(1097, 528);
  ctx.quadraticCurveTo(1118, 492, 1143, 481);
  ctx.stroke();
})();
```
